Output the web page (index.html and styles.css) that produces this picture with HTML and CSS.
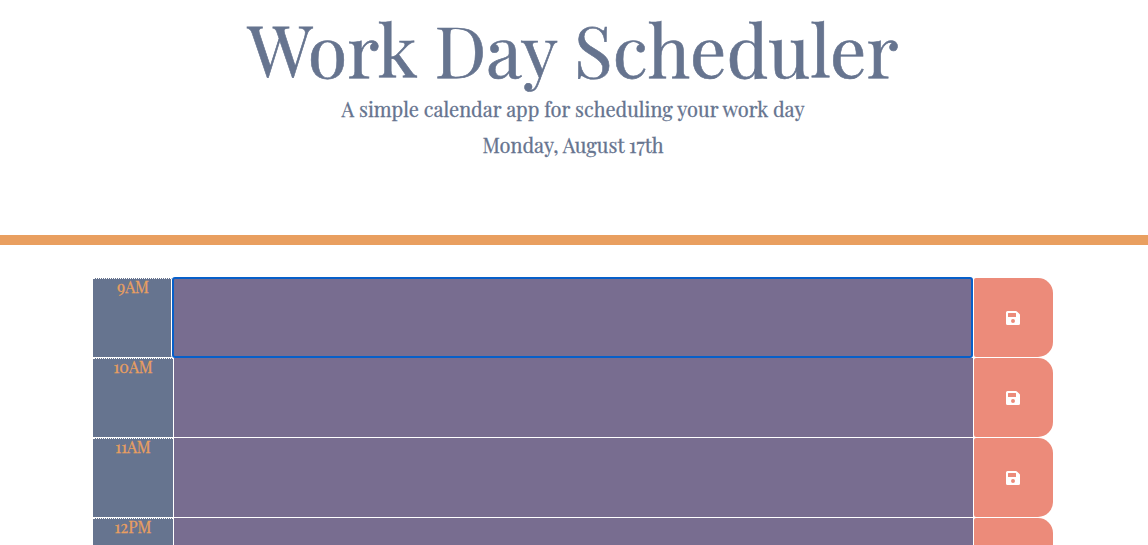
FILE: index.html
```html
<!DOCTYPE html>
<html lang="en">
<head>
<meta charset="utf-8">
<title>Work Day Scheduler</title>
<link rel="stylesheet" href="styles.css">
</head>
<body>
<svg class="sprite" viewBox="0 0 448 448"><symbol id="save" viewBox="0 32 448 448"><path d="M433.9 129.900 350.100 46.100A48 48 0 0 0 316.100 32H48A48 48 0 0 0 0 80v352a48 48 0 0 0 48 48h352a48 48 0 0 0 48-48V163.900a48 48 0 0 0-14.100-34zM224 416a64 64 0 1 1 0-128 64 64 0 0 1 0 128zm96-304.500V212a12 12 0 0 1-12 12H76a12 12 0 0 1-12-12V108a12 12 0 0 1 12-12h228.500a12 12 0 0 1 8.500 3.500l3.500 3.500a12 12 0 0 1 3.500 8.500z"/></symbol></svg>
<header class="header">
<h1 class="title">Work Day Scheduler</h1>
<p class="lead">A simple calendar app for scheduling your work day</p>
<p class="date">Monday, August 17th</p>
</header>
<main class="schedule">
<div class="row active"><div class="hour">9AM</div><div class="task"></div><button class="save" aria-label="Save"><svg class="icon"><use href="#save"/></svg></button></div>
<div class="row"><div class="hour">10AM</div><div class="task"></div><button class="save" aria-label="Save"><svg class="icon"><use href="#save"/></svg></button></div>
<div class="row"><div class="hour">11AM</div><div class="task"></div><button class="save" aria-label="Save"><svg class="icon"><use href="#save"/></svg></button></div>
<div class="row last"><div class="hour">12PM</div><div class="task"></div><button class="save" aria-label="Save"></button></div>
</main>
</body>
</html>
```
FILE: styles.css
```css
* { box-sizing: border-box; }
body {
  margin: 0;
  height: 545px;
  overflow: hidden;
  background: #fff;
  font-family: "Playfair Display", "Liberation Serif", serif;
}
.sprite { display: none; }
.header {
  height: 245px;
  padding: 5px 2px 0 0;
  border-bottom: 10px solid #e99f60;
  color: #66748f;
  text-align: center;
}
.title {
  margin: 0 0 3px;
  font-size: 72px;
  font-weight: 400;
  line-height: 86px;
  -webkit-text-stroke: 0.6px #66748f;
}
.lead, .date {
  margin: 0;
  font-size: 20px;
  line-height: 30px;
  -webkit-text-stroke: 0.3px #66748f;
}
.date { margin-top: 6px; }
.schedule { width: 960px; margin: 33px 0 0 93px; }
.row { display: flex; height: 80px; border-bottom: 1px solid #fff; }
.last { height: 27px; border-bottom: 0; }
.hour {
  width: 80px;
  border-top: 1px dotted #fff;
  background: #66748f;
  color: #e99f60;
  font-size: 16px;
  line-height: 16px;
  text-align: center;
  -webkit-text-stroke: 0.3px #e99f60;
}
.task {
  width: 801px;
  border: solid #fff;
  border-width: 0 1px;
  background: #786d90;
}
.active .task {
  width: 801px;
  height: 81px;
  margin: -1px 1px 0 -1px;
  border: 2px solid #075fc9;
  border-radius: 3px;
  box-shadow: -1px 0 #fff;
  z-index: 1;
}
.save {
  display: flex;
  width: 79px;
  padding: 0 1px 0 0;
  align-items: center;
  justify-content: center;
  border: 0;
  border-radius: 2px 15px 15px 2px;
  background: #ec8b7a;
}
.last .save { border-radius: 2px 15px 0 0; }
.icon { width: 14px; height: 14px; fill: #fff; }
```
